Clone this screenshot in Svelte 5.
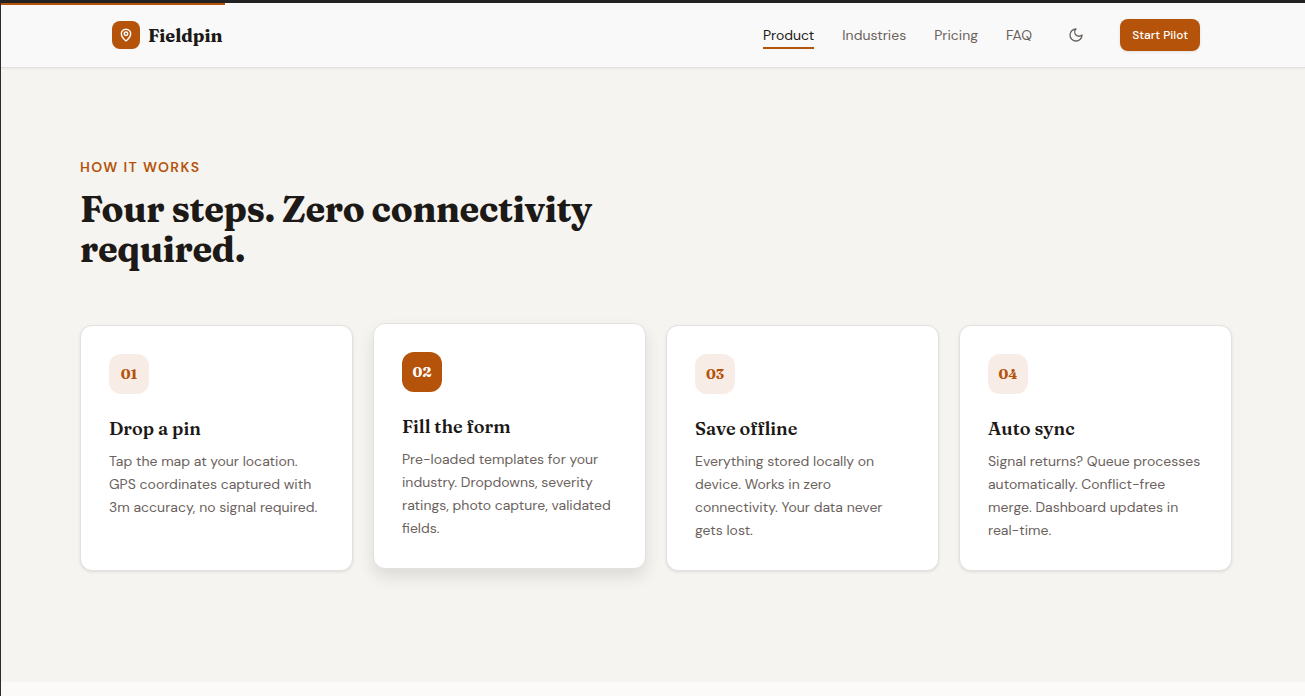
<script lang="ts">
  interface Step {
    title: string;
    text: string;
  }

  const links = ['Product', 'Industries', 'Pricing', 'FAQ'];

  const steps: Step[] = [
    {
      title: 'Drop a pin',
      text: 'Tap the map at your location. GPS coordinates captured with 3m accuracy, no signal required.',
    },
    {
      title: 'Fill the form',
      text: 'Pre-loaded templates for your industry. Dropdowns, severity ratings, photo capture, validated fields.',
    },
    {
      title: 'Save offline',
      text: 'Everything stored locally on device. Works in zero connectivity. Your data never gets lost.',
    },
    {
      title: 'Auto sync',
      text: 'Signal returns? Queue processes automatically. Conflict-free merge. Dashboard updates in real-time.',
    },
  ];

  let current = $state('Product');
  let active = $state(1);
  let progress = $state(17.2);
</script>

<div class="page">
  <div class="progress" style:width="{progress}%"></div>

  <header>
    <div class="container bar">
      <a class="brand" href="#top">
        <span class="logo">
          <svg viewBox="0 0 24 24" aria-hidden="true">
            <path d="M20 10c0 5-5.5 10.2-7.4 11.8a1 1 0 0 1-1.2 0C9.5 20.2 4 15 4 10a8 8 0 0 1 16 0z" />
            <circle cx="12" cy="10" r="3" />
          </svg>
        </span>
        Fieldpin
      </a>
      <nav>
        {#each links as link}
          <a
            class="link"
            class:current={current === link}
            href="#{link.toLowerCase()}"
            onclick={() => (current = link)}
          >{link}</a>
        {/each}
        <button class="theme" aria-label="Toggle dark mode">
          <svg viewBox="0 0 24 24" aria-hidden="true">
            <path d="M12 3a6 6 0 0 0 9 9 9 9 0 1 1-9-9z" />
          </svg>
        </button>
        <button class="cta">Start Pilot</button>
      </nav>
    </div>
  </header>

  <section id="product">
    <div class="container">
      <p class="eyebrow">How it works</p>
      <h2>Four steps. Zero connectivity required.</h2>
      <ol class="steps">
        {#each steps as step, i}
          <li class="card" class:active={active === i} onmouseenter={() => (active = i)}>
            <span class="num">0{i + 1}</span>
            <h3>{step.title}</h3>
            <p>{step.text}</p>
          </li>
        {/each}
      </ol>
    </div>
  </section>
</div>

<style>
  :global(body) {
    background: #fbfaf8;
  }
  .page {
    position: relative;
    box-sizing: border-box;
    min-height: 100vh;
    border-top: 3px solid #232122;
    border-left: 1px solid #2e2b2c;
    background: #fbfaf8;
    color: #1c1917;
    font-family: 'DM Sans', Inter, sans-serif;
    font-size: 14px;
  }
  .progress {
    position: absolute;
    top: 0;
    left: 0;
    z-index: 2;
    height: 2px;
    background: #b45309;
  }
  .container {
    max-width: 1152px;
    margin: 0 73px 0 79px;
  }
  header {
    position: relative;
    z-index: 1;
    border-bottom: 1px solid #e0e0dc;
    background: #f9f9f9;
    box-shadow: 0 1px 2px rgba(0, 0, 0, 0.05);
  }
  .bar {
    display: flex;
    align-items: center;
    justify-content: space-between;
    box-sizing: border-box;
    height: 64px;
    padding: 0 32px;
  }
  .brand {
    display: flex;
    align-items: center;
    gap: 8px;
    color: inherit;
    font-family: Fraunces, 'Liberation Serif', serif;
    font-size: 18px;
    font-weight: 700;
    text-decoration: none;
  }
  .logo {
    display: flex;
    align-items: center;
    justify-content: center;
    width: 28px;
    height: 28px;
    border-radius: 8px;
    background: #b45309;
  }
  svg {
    fill: none;
    stroke: currentColor;
    stroke-width: 2;
    stroke-linecap: round;
    stroke-linejoin: round;
  }
  .logo svg {
    width: 14px;
    height: 14px;
    color: #fff;
    stroke-width: 2.5;
  }
  nav {
    display: flex;
    align-items: center;
    gap: 28px;
  }
  .link {
    padding: 4px 0 2px;
    border-bottom: 2px solid transparent;
    color: #6b625d;
    line-height: 20px;
    text-decoration: none;
  }
  .link.current {
    border-color: #b45309;
    color: #1c1917;
  }
  button {
    border: none;
    font-family: inherit;
    cursor: pointer;
  }
  .theme {
    display: flex;
    align-items: center;
    justify-content: center;
    width: 32px;
    height: 32px;
    padding: 0;
    background: none;
    color: #6b625d;
  }
  .theme svg {
    width: 16px;
    height: 16px;
  }
  .cta {
    height: 32px;
    padding: 0 12px;
    border-radius: 8px;
    background: #b45309;
    box-shadow: 0 1px 3px rgba(0, 0, 0, 0.1);
    color: #fff;
    font-size: 12px;
    font-weight: 500;
  }
  section {
    padding: 88px 0 111px;
    background: #f5f4f0;
  }
  .eyebrow {
    margin: 0 0 11px;
    color: #b45309;
    font-size: 14px;
    font-weight: 600;
    letter-spacing: 0.1em;
    line-height: 22px;
    text-transform: uppercase;
  }
  h2 {
    max-width: 560px;
    margin: 0 0 56px;
    font-family: Fraunces, 'Liberation Serif', serif;
    font-size: 36px;
    font-weight: 700;
    letter-spacing: -0.01em;
    line-height: 40px;
  }
  .steps {
    display: grid;
    grid-template-columns: repeat(4, 1fr);
    gap: 20px;
    margin: 0;
    padding: 0;
    list-style: none;
  }
  .card {
    padding: 28px;
    border: 1px solid #e2e1df;
    border-radius: 12px;
    background: #fff;
    box-shadow: 0 1px 3px rgba(0, 0, 0, 0.1);
    transition: transform 0.2s, box-shadow 0.2s;
  }
  .card.active {
    box-shadow: 0 8px 16px rgba(0, 0, 0, 0.1);
    transform: translateY(-2px);
  }
  .num {
    display: flex;
    align-items: center;
    justify-content: center;
    width: 40px;
    height: 40px;
    margin-bottom: 20px;
    border-radius: 12px;
    background: #f8ece6;
    color: #b45309;
    font-family: Fraunces, 'Liberation Serif', serif;
    font-size: 14px;
    font-weight: 700;
  }
  .active .num {
    background: #b45309;
    color: #fff;
  }
  h3 {
    margin: 0 0 6px;
    font-family: Fraunces, 'Liberation Serif', serif;
    font-size: 18px;
    font-weight: 600;
    line-height: 30px;
  }
  .card p {
    margin: 0;
    color: #6b625d;
    line-height: 23px;
  }
</style>
